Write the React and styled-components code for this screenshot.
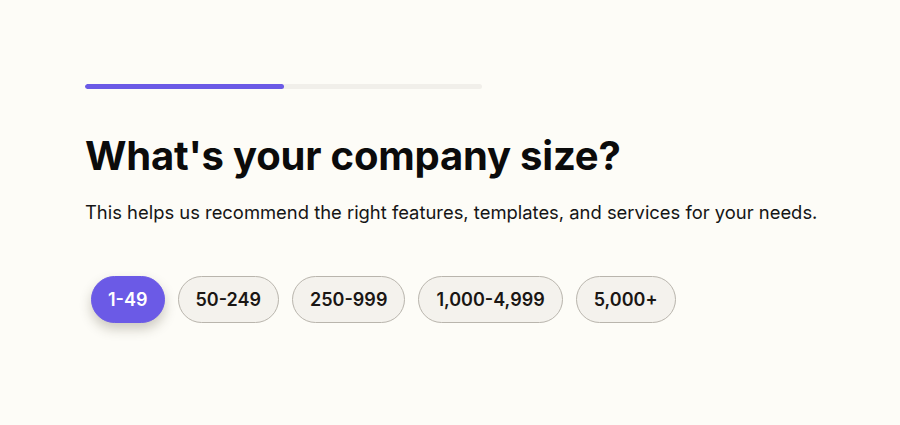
import styled, { createGlobalStyle } from "styled-components";

const Global = createGlobalStyle`
  html, body { margin: 0; background: #fdfcf7; }
  body { font-family: Inter, "Noto Sans", sans-serif; color: #111; }
`;

const sizes = ["1-49", "50-249", "250-999", "1,000-4,999", "5,000+"];

export default function App() {
  return (
    <Page>
      <Global />
      <Track>
        <Fill style={{ width: "50%" }} />
      </Track>
      <Heading>What's your company size?</Heading>
      <Sub>This helps us recommend the right features, templates, and services for your needs.</Sub>
      <Options>
        {sizes.map((s, i) => (
          <Chip key={s} $active={i === 0}>{s}</Chip>
        ))}
      </Options>
    </Page>
  );
}

const Page = styled.div`
  width: 900px;
  height: 425px;
  box-sizing: border-box;
  padding: 84px 0 0 85px;
`;

const Track = styled.div`
  width: 397px;
  height: 5px;
  border-radius: 3px;
  background: #f1efea;
  overflow: hidden;
`;

const Fill = styled.div`
  height: 100%;
  border-radius: 3px;
  background: #6b5ae6;
`;

const Heading = styled.h1`
  margin: 43px 0 0;
  font-size: 40px;
  line-height: 48px;
  font-weight: 700;
  letter-spacing: -0.2px;
  color: #0b0b0b;
`;

const Sub = styled.p`
  margin: 20px 0 0;
  font-size: 18.4px;
  line-height: 24px;
  color: #151515;
`;

const Options = styled.div`
  display: flex;
  gap: 13px;
  margin-top: 52px;
  padding-left: 6px;
`;

const Chip = styled.button`
  height: 47px;
  padding: 0 ${p => (p.$active ? 16 : 17)}px;
  border-radius: 24px;
  font-family: Inter, sans-serif;
  font-size: 18px;
  font-weight: 600;
  cursor: pointer;
  border: 1.5px solid ${p => (p.$active ? "#6b5ae6" : "#b9b5ad")};
  background: ${p => (p.$active ? "#6b5ae6" : "#f4f2ed")};
  color: ${p => (p.$active ? "#fff" : "#1a1614")};
  box-shadow: ${p => (p.$active ? "0 6px 12px rgba(60, 50, 30, 0.25)" : "none")};
`;
